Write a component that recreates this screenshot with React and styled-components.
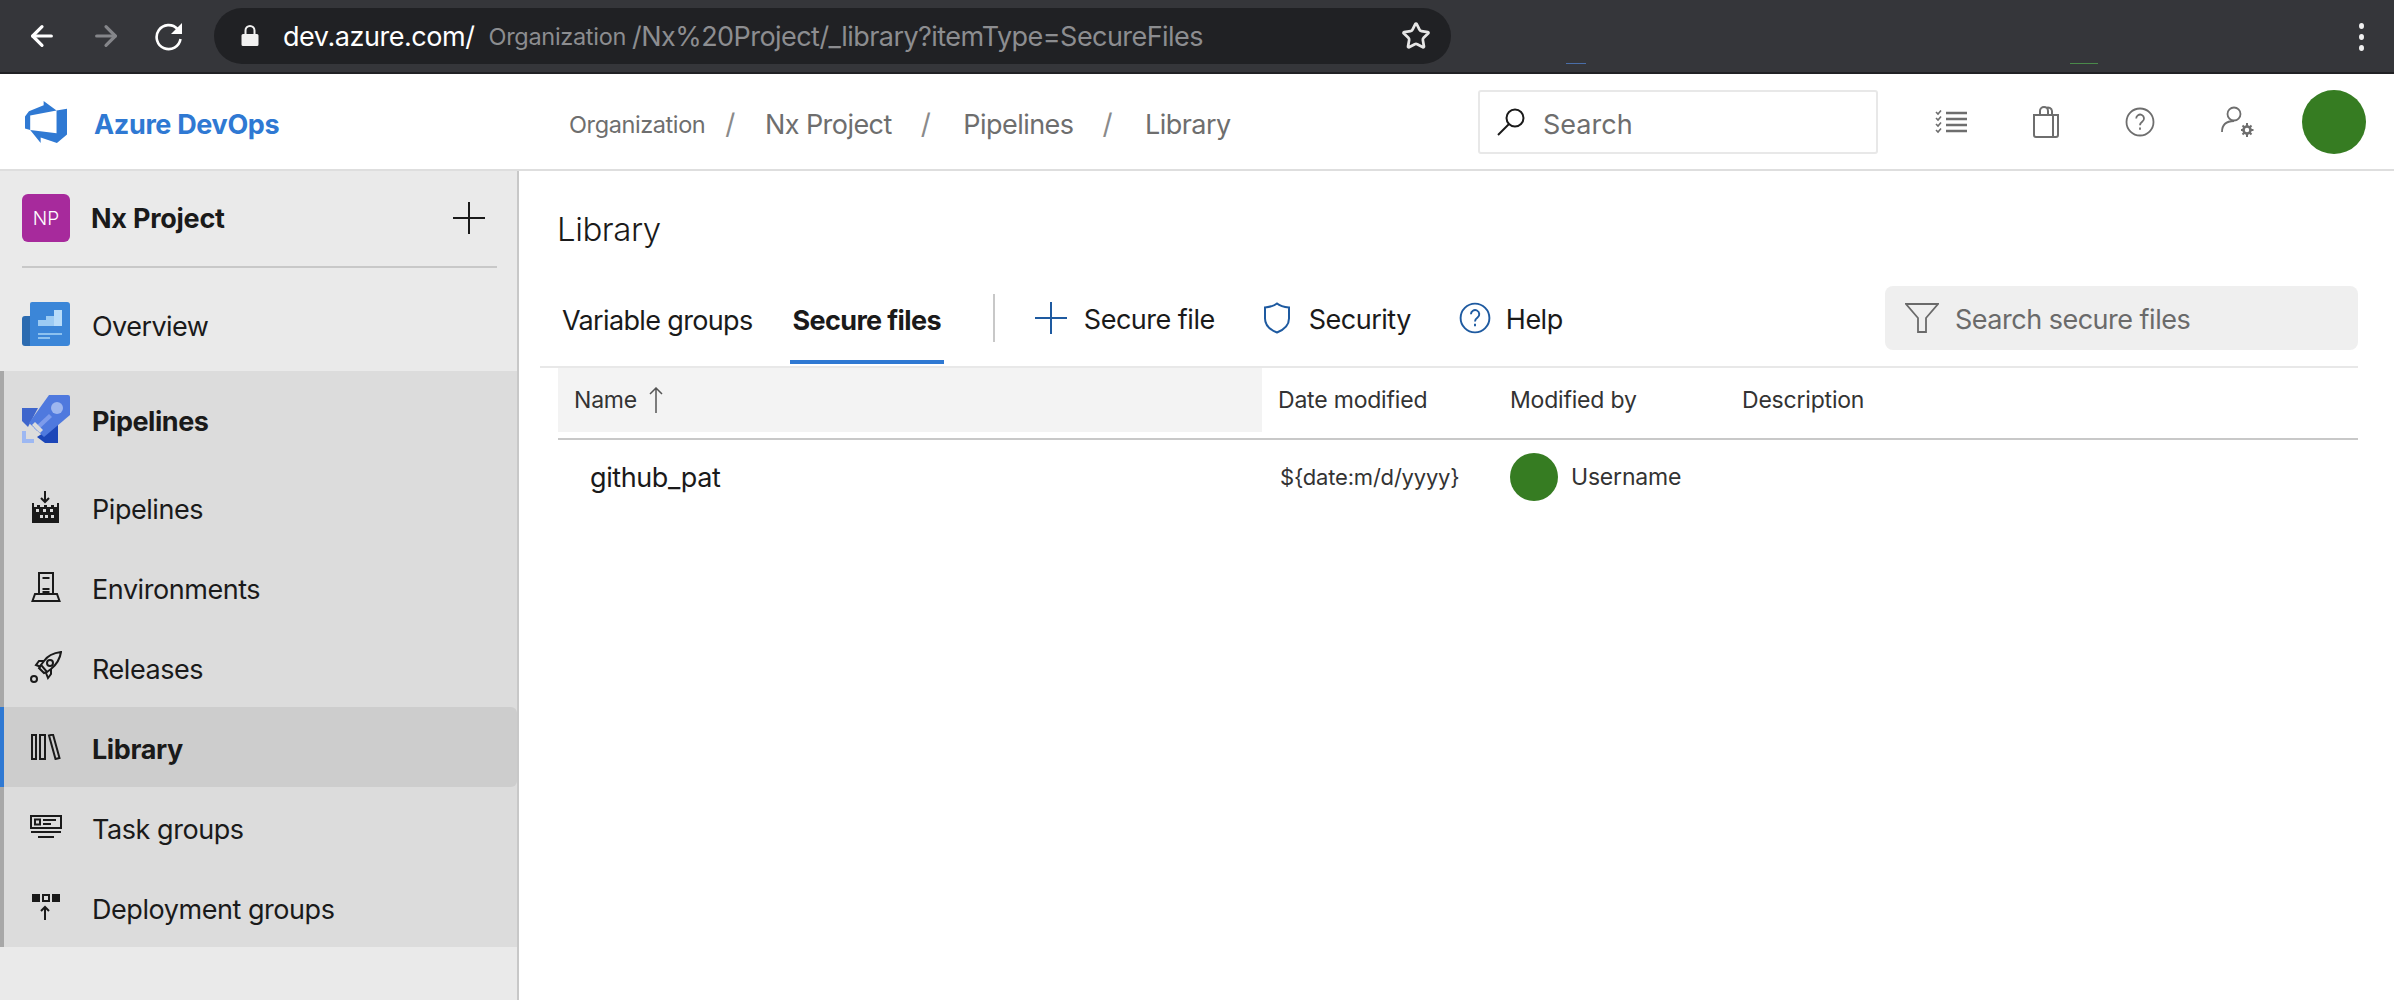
import styled, { createGlobalStyle } from "styled-components"
import { ArrowLeft, ArrowRight, Star } from "lucide-react"

const GlobalStyle = createGlobalStyle`
  * {
    box-sizing: border-box;
  }

  html,
  body {
    margin: 0;
    background: #fff;
    overflow: hidden;
  }

  body {
    font-family: Inter, "Liberation Sans", sans-serif;
    color: #1a1a1a;
  }
`

const Page = styled.div`
  width: 2394px;
  height: 1000px;
  display: flex;
  flex-direction: column;
`

/* browser chrome */

const BrowserBar = styled.div`
  position: relative;
  height: 74px;
  flex: none;
  background: #35363a;
  border-bottom: 2px solid #202124;
  display: flex;
  align-items: flex-start;
  padding: 8px 0 0 26px;
`

const NavIcons = styled.div`
  display: flex;
  align-items: center;
  gap: 32px;
  height: 56px;
  width: 188px;
  flex: none;
`

const NavIcon = styled.span`
  display: flex;
  color: ${(props) => (props.dim ? "#85868a" : "#fff")};
`

const UrlPill = styled.div`
  width: 1237px;
  height: 56px;
  flex: none;
  border-radius: 28px;
  background: #202124;
  display: flex;
  align-items: center;
  padding: 0 20px 0 27px;
  font-size: 27px;
  letter-spacing: -0.45px;
  white-space: nowrap;
`

const UrlHost = styled.span`
  color: #fff;
  margin-left: 24px;
`

const UrlOrg = styled.span`
  color: #8c8d90;
  font-size: 23.5px;
  letter-spacing: -0.3px;
  margin: 0 6px 0 14px;
`

const UrlPath = styled.span`
  color: #8c8d90;
  letter-spacing: -0.55px;
`

const UrlStar = styled.span`
  display: flex;
  margin-left: auto;
  color: #e6e6e6;
`

const TabMark = styled.span`
  position: absolute;
  top: 63px;
  left: ${(props) => props.left}px;
  width: ${(props) => props.width}px;
  height: 1px;
  background: ${(props) => props.color};
`

const MoreDots = styled.div`
  position: absolute;
  right: 30px;
  top: 23px;
  display: flex;
  flex-direction: column;
  gap: 5px;

  span {
    width: 5px;
    height: 6px;
    border-radius: 50%;
    background: #f0f0f0;
  }
`

/* azure header */

const Header = styled.header`
  height: 97px;
  flex: none;
  display: flex;
  align-items: center;
  border-bottom: 2px solid #dedede;
  padding-left: 25px;
`

const Brand = styled.div`
  display: flex;
  align-items: center;
  gap: 27px;
  width: 544px;
  flex: none;
  color: #2f79d3;
  font-size: 27px;
  font-weight: 700;
  letter-spacing: -0.35px;
`

const Crumbs = styled.nav`
  display: flex;
  align-items: center;
  width: 909px;
  flex: none;
  padding-top: 5px;
  color: #6e6e6e;
  font-size: 27px;
  letter-spacing: -0.55px;
`

const CrumbOrg = styled.span`
  font-size: 23.5px;
  letter-spacing: -0.4px;
`

const Slash = styled.span`
  color: #8a8a8a;
  font-size: 28px;
  margin: 0 ${(props) => (props.first ? 30 : 33)}px 0 ${(props) => (props.first ? 20 : 29)}px;
`

const SearchBox = styled.div`
  width: 400px;
  height: 64px;
  flex: none;
  border: 2px solid #e8e8e8;
  border-radius: 3px;
  display: flex;
  align-items: center;
  gap: 17px;
  padding-left: 16px;
  color: #6e6e6e;
  font-size: 27px;
`

const HeaderIcons = styled.div`
  display: flex;
  align-items: center;
  flex: none;
  margin-left: 57px;
  gap: 66px;
  color: #6e6e6e;
`

const Avatar = styled.div`
  width: ${(props) => props.size}px;
  height: ${(props) => props.size}px;
  border-radius: 50%;
  background: #367c22;
  flex: none;
`

const HeaderAvatar = styled(Avatar)`
  margin-left: 47px;
`

/* the text sits a little lower than the icons next to it */
const Label = styled.span`
  padding-top: 5px;
`

const ToolLabel = styled.span`
  padding-top: 3px;
`

/* body */

const Body = styled.div`
  flex: 1;
  display: flex;
  min-height: 0;
`

const Sidebar = styled.aside`
  width: 519px;
  flex: none;
  background: #eaeaea;
  border-right: 2px solid #c8c8c8;
`

const ProjectRow = styled.div`
  height: 97px;
  margin: 0 20px 0 22px;
  border-bottom: 2px solid #c8c8c8;
  display: flex;
  align-items: center;
  padding-bottom: 1px;
  font-size: 27px;
  font-weight: 700;
  letter-spacing: -0.25px;
`

const ProjectBadge = styled.div`
  width: 48px;
  height: 48px;
  border-radius: 6px;
  background: #a72a9c;
  color: #fff;
  font-size: 19px;
  font-weight: 300;
  letter-spacing: 0;
  display: flex;
  align-items: center;
  justify-content: center;
  margin-right: 21px;
`

const ProjectPlus = styled.span`
  display: flex;
  margin-left: auto;
  margin-right: 12px;
`

const OverviewRow = styled.div`
  height: 103px;
  display: flex;
  align-items: center;
  padding: 8px 0 0 22px;
  gap: 22px;
  font-size: 27px;
  letter-spacing: -0.55px;
`

const PipelinesGroup = styled.div`
  background: #dcdcdc;
  border-left: 4px solid #a8a8a8;
`

const GroupHead = styled.div`
  height: 96px;
  display: flex;
  align-items: center;
  padding-left: 18px;
  gap: 22px;
  font-size: 27px;
  font-weight: 700;
  letter-spacing: -0.45px;
`

const NavItem = styled.div`
  position: relative;
  height: 80px;
  display: flex;
  align-items: center;
  padding-left: 18px;
  gap: 22px;
  font-size: 27px;
  font-weight: ${(props) => (props.active ? 700 : 400)};
  letter-spacing: ${(props) => (props.active ? "-0.4px" : "-0.45px")};
  background: ${(props) => (props.active ? "#cdcdcd" : "transparent")};
  border-radius: ${(props) => (props.active ? "0 6px 6px 0" : "0")};

  ${(props) =>
    props.active &&
    `
    &::before {
      content: "";
      position: absolute;
      left: -4px;
      top: 0;
      bottom: 0;
      width: 4px;
      background: #2f79d3;
    }
  `}
`

const NavGlyph = styled.span`
  width: 48px;
  height: 48px;
  flex: none;
  display: flex;
  align-items: center;
  justify-content: center;
`

const Main = styled.main`
  flex: 1;
  min-width: 0;
  padding: 0 36px 0 21px;
`

const Title = styled.h1`
  margin: 0;
  padding: 33px 0 0 17px;
  height: 115px;
  font-size: 33px;
  line-height: 50px;
  font-weight: 300;
  letter-spacing: -0.45px;
  color: #1a1a1a;
`

const TabBar = styled.div`
  height: 82px;
  display: flex;
  align-items: flex-start;
  padding-left: 19px;
  border-bottom: 2px solid #e8e8e8;
`

const Tab = styled.div`
  height: 78px;
  padding: 15px 3px 0;
  font-size: 27px;
  line-height: 40px;
  letter-spacing: -0.65px;
  margin-right: ${(props) => props.gap}px;
  font-weight: ${(props) => (props.active ? 700 : 400)};
  border-bottom: 4px solid ${(props) => (props.active ? "#2f79d3" : "transparent")};
  color: #1a1a1a;
`

const TabDivider = styled.div`
  width: 2px;
  height: 48px;
  margin: 8px 40px 0 49px;
  background: #c8c8c8;
`

const Action = styled.div`
  display: flex;
  align-items: center;
  height: 48px;
  margin-top: 8px;
  gap: ${(props) => props.gap}px;
  margin-right: ${(props) => props.after}px;
  font-size: 27px;
  letter-spacing: -0.5px;
`

const ActionIcon = styled.span`
  display: flex;
  color: #1e5aa0;
`

const FilterBox = styled.div`
  margin-left: auto;
  width: 473px;
  height: 64px;
  border-radius: 8px;
  background: #efefef;
  display: flex;
  align-items: center;
  gap: 16px;
  padding: 0 0 0 20px;
  color: #6a6a6a;
  font-size: 27px;
  letter-spacing: -0.5px;
`

const TableHead = styled.div`
  margin-left: 18px;
  height: 72px;
  display: grid;
  grid-template-columns: 704px 232px 232px 1fr;
  border-bottom: 2px solid #c8c8c8;
  font-size: 23px;
  letter-spacing: -0.2px;
  color: #333;
`

const HeadCell = styled.div`
  height: 64px;
  display: flex;
  align-items: center;
  gap: 12px;
  padding-left: 16px;
  background: ${(props) => (props.sorted ? "#f3f3f3" : "transparent")};
`

const TableRow = styled.div`
  margin-left: 18px;
  height: 74px;
  display: grid;
  grid-template-columns: 704px 232px 232px 1fr;
  align-items: center;
`

const FileName = styled.div`
  padding-left: 32px;
  font-size: 27px;
  letter-spacing: -0.4px;
`

const DateCell = styled.div`
  padding-left: 18px;
  font-size: 22px;
  letter-spacing: -0.2px;
  color: #333;
`

const UserCell = styled.div`
  display: flex;
  align-items: center;
  gap: 13px;
  padding-left: 16px;
  font-size: 23px;
  letter-spacing: -0.2px;
  color: #333;
`

function LockIcon() {
  return (
    <svg width="18" height="22" viewBox="0 0 18 22" fill="#f1f1f1">
      <path d="M2 9h14a1.5 1.5 0 0 1 1.5 1.5v9A1.5 1.5 0 0 1 16 21H2a1.5 1.5 0 0 1-1.5-1.5v-9A1.5 1.5 0 0 1 2 9z" />
      <path d="M4.5 9V5.5a4.5 4.5 0 0 1 9 0V9" fill="none" stroke="#f1f1f1" strokeWidth="2" />
    </svg>
  )
}

function ReloadIcon() {
  return (
    <svg width="30" height="30" viewBox="0 0 30 30">
      <path d="M23.500 8a12 12 0 1 0 3 10" fill="none" stroke="#fff" strokeWidth="2.6" />
      <path d="M28 2v11H17z" fill="#fff" />
    </svg>
  )
}

function AzureLogo() {
  return (
    <svg width="42" height="42" viewBox="0 0 24 24" fill="#2f79d3">
      <path d="M0 8.877L2.247 5.91l8.405-3.416V.022l7.37 5.393L2.966 8.338v8.225L0 15.707zm24-4.45v14.651l-5.753 4.9-9.303-3.057v3.056l-5.978-7.416 15.057 1.798V5.415z" />
    </svg>
  )
}

function SearchGlass() {
  return (
    <svg width="30" height="30" viewBox="0 0 30 30" fill="none" stroke="#1a1a1a" strokeWidth="2">
      <circle cx="19" cy="11" r="8.5" />
      <path d="M13 17L2 28" />
    </svg>
  )
}

function ChecklistIcon() {
  return (
    <svg width="32" height="24" viewBox="0 0 32 24" fill="none" stroke="#6e6e6e">
      <path d="M11 3h21M11 9h21M11 15h21M11 21h21" strokeWidth="2.4" />
      <path d="M1 2l2 2 3-3.5M1 8l2 2 3-3.5M1 14l2 2 3-3.5M1 20l2 2 3-3.5" strokeWidth="1.6" />
    </svg>
  )
}

function BagIcon() {
  return (
    <svg width="26" height="32" viewBox="0 0 26 32" fill="none" stroke="#6e6e6e" strokeWidth="2">
      <path d="M1 9h19v22H3a2 2 0 0 1-2-2z" />
      <path d="M20 9h5v20a2 2 0 0 1-2 2h-3" />
      <path d="M7 9V5a4 4 0 0 1 8 0v4M13 2a4 4 0 0 1 6 3v4" />
    </svg>
  )
}

function HelpCircle({ size, color }) {
  return (
    <svg width={size} height={size} viewBox="0 0 30 30" fill="none" stroke={color} strokeWidth="1.8">
      <circle cx="15" cy="15" r="13.5" />
      <path d="M11.2 11.5a3.9 3.9 0 1 1 6.2 3.1c-1.5 1.1-2.4 1.9-2.4 3.6" />
      <path d="M15 20.5v2.2" />
    </svg>
  )
}

function UserGear() {
  return (
    <svg width="34" height="32" viewBox="0 0 34 32" fill="none" stroke="#6e6e6e" strokeWidth="1.8">
      <circle cx="13" cy="8" r="6.5" />
      <path d="M1 26c0-7 4-11 12-11" />
      <circle cx="26" cy="24" r="3.5" strokeWidth="2.6" />
      <path d="M26 17v3M26 28v3M20 24h2.5M30 24h2.5M21.5 19.5l2 2M28.5 26.5l2 2M21.5 28.5l2-2M28.5 21.5l2-2" strokeWidth="2" />
    </svg>
  )
}

function PlusIcon({ size, color, width }) {
  return (
    <svg width={size} height={size} viewBox="0 0 32 32" fill="none" stroke={color} strokeWidth={width}>
      <path d="M16 0v32M0 16h32" />
    </svg>
  )
}

function OverviewIcon() {
  return (
    <svg width="48" height="44" viewBox="0 0 48 44">
      <path d="M3 14h8v30H3a3 3 0 0 1-3-3V17a3 3 0 0 1 3-3z" fill="#2c6bb0" />
      <path d="M10 0h35a3 3 0 0 1 3 3v38a3 3 0 0 1-3 3H8V2a2 2 0 0 1 2-2z" fill="#3b86d8" />
      <path d="M16 18h8v6h-8zM24 14h8v10h-8z" fill="#9ccbf3" />
      <path d="M32 8h8v16h-8z" fill="#b8dcf9" />
      <path d="M16 31h24v2H16zM16 35h12v2H16z" fill="#8cc1ef" />
    </svg>
  )
}

function PipelinesIcon() {
  return (
    <svg width="48" height="48" viewBox="0 0 48 48">
      <path d="M0 13h16L6 32 0 26z" fill="#3f66cc" />
      <path d="M36 28v20H23l-8-6z" fill="#1c46b8" />
      <path d="M27 0h19a2 2 0 0 1 2 2v18L22 42 7 28z" fill="#4f79de" />
      <circle cx="35" cy="13" r="6" fill="#9db6ef" />
      <path d="M12 33l15-14 3 3-15 14z" fill="#7d9beb" />
      <path d="M0 36h4v8h8v4H0z" fill="#9db8f2" />
      <path d="M10 30l3-3 8 8-3 3z" fill="#dcdcdc" />
    </svg>
  )
}

const lineProps = { fill: "none", stroke: "#1a1a1a", strokeWidth: 2 }

function SubPipelines() {
  return (
    <svg width="28" height="32" viewBox="0 0 28 32">
      <path d="M13 0v11M9 7l4 4 4-4" {...lineProps} />
      <path d="M0 12h2v4h3v-2h3v2h4v-2h3v2h4v-2h3v2h3v-4h2v20H0z" fill="#1a1a1a" />
      <path d="M8 24h3v3H8zM13 24h3v3h-3zM19 24h3v3h-3z" fill="#dcdcdc" />
      <path d="M4 18h3v3H4zM11 18h3v3h-3zM18 18h3v3h-3z" fill="#dcdcdc" />
    </svg>
  )
}

function EnvironmentsIcon() {
  return (
    <svg width="30" height="30" viewBox="0 0 30 30" {...lineProps}>
      <path d="M8 22V1h14v21" />
      <path d="M11.5 6h7M11.5 17h7M11.5 20h7" />
      <path d="M4 22h22l2.5 7h-27z" />
    </svg>
  )
}

function ReleasesIcon() {
  return (
    <svg width="32" height="32" viewBox="0 0 32 32" {...lineProps}>
      <path d="M31 1c-8 1-13 3-17 9l-3 4 6 7 4-3c6-5 9-10 10-17z" />
      <circle cx="20" cy="12" r="3" />
      <path d="M14 10H9l-3 4 5 2M21 18v5l-3 4-2-5M11 14l-2 3 5 5 3-1" />
      <circle cx="4" cy="28" r="3" />
    </svg>
  )
}

function LibraryIcon() {
  return (
    <svg width="30" height="26" viewBox="0 0 30 26" {...lineProps}>
      <path d="M1 1h4v24H1zM9 1h5v24H9zM18 1.500l4-1 6.500 23.500-4 1z" />
    </svg>
  )
}

function TaskGroupsIcon() {
  return (
    <svg width="32" height="24" viewBox="0 0 32 24" {...lineProps}>
      <path d="M1 1h30v12H1z" />
      <path d="M5 4.500h5v5H5zM13 5h13M13 9h8M1 17h30M8 22h16" />
    </svg>
  )
}

function DeploymentIcon() {
  return (
    <svg width="28" height="26" viewBox="0 0 28 26">
      <path d="M0 0h8v8H0zM20 0h8v8h-8z" fill="#1a1a1a" />
      <path d="M11 1h6v6h-6z" {...lineProps} />
      <path d="M13 26V13M9 17l4-4 4 4" {...lineProps} />
    </svg>
  )
}

function ShieldIcon() {
  return (
    <svg width="28" height="32" viewBox="0 0 28 32" fill="none" stroke="#1e5aa0" strokeWidth="2">
      <path d="M14 1.500c3 2.500 7 3.500 12 4v11c0 6.500-4.500 11-12 14-7.500-3-12-7.500-12-14v-11c5-.5 9-1.500 12-4z" />
    </svg>
  )
}

function FunnelIcon() {
  return (
    <svg width="34" height="30" viewBox="0 0 34 30" fill="none" stroke="#6a6a6a" strokeWidth="1.8">
      <path d="M1 1h32L21 15v14h-8V15z" />
    </svg>
  )
}

function SortArrow() {
  return (
    <svg width="14" height="26" viewBox="0 0 14 26" fill="none" stroke="#555" strokeWidth="1.500">
      <path d="M7 26V1M1 7l6-6 6 6" />
    </svg>
  )
}

const navItems = [
  { label: "Pipelines", icon: <SubPipelines /> },
  { label: "Environments", icon: <EnvironmentsIcon /> },
  { label: "Releases", icon: <ReleasesIcon /> },
  { label: "Library", icon: <LibraryIcon />, active: true },
  { label: "Task groups", icon: <TaskGroupsIcon /> },
  { label: "Deployment groups", icon: <DeploymentIcon /> },
]

export default function App() {
  return (
    <Page>
      <GlobalStyle />
      <BrowserBar>
        <NavIcons>
          <NavIcon>
            <ArrowLeft size={32} strokeWidth={2.4} />
          </NavIcon>
          <NavIcon dim>
            <ArrowRight size={32} strokeWidth={2.4} />
          </NavIcon>
          <NavIcon>
            <ReloadIcon />
          </NavIcon>
        </NavIcons>
        <UrlPill>
          <LockIcon />
          <UrlHost>dev.azure.com/</UrlHost>
          <UrlOrg>Organization</UrlOrg>
          <UrlPath>/Nx%20Project/_library?itemType=SecureFiles</UrlPath>
          <UrlStar>
            <Star size={30} strokeWidth={2.2} />
          </UrlStar>
        </UrlPill>
        <TabMark left={1566} width={20} color="#4a6ea8" />
        <TabMark left={2070} width={28} color="#4a8a4a" />
        <MoreDots>
          <span />
          <span />
          <span />
        </MoreDots>
      </BrowserBar>

      <Header>
        <Brand>
          <AzureLogo />
          <Label>Azure DevOps</Label>
        </Brand>
        <Crumbs>
          <CrumbOrg>Organization</CrumbOrg>
          <Slash first>/</Slash>
          Nx Project
          <Slash>/</Slash>
          Pipelines
          <Slash>/</Slash>
          Library
        </Crumbs>
        <SearchBox>
          <SearchGlass />
          <Label>Search</Label>
        </SearchBox>
        <HeaderIcons>
          <ChecklistIcon />
          <BagIcon />
          <HelpCircle size={30} color="#6e6e6e" />
          <UserGear />
        </HeaderIcons>
        <HeaderAvatar size={64} />
      </Header>

      <Body>
        <Sidebar>
          <ProjectRow>
            <ProjectBadge>NP</ProjectBadge>
            Nx Project
            <ProjectPlus>
              <PlusIcon size={32} color="#1a1a1a" width={2} />
            </ProjectPlus>
          </ProjectRow>
          <OverviewRow>
            <NavGlyph>
              <OverviewIcon />
            </NavGlyph>
            <Label>Overview</Label>
          </OverviewRow>
          <PipelinesGroup>
            <GroupHead>
              <NavGlyph>
                <PipelinesIcon />
              </NavGlyph>
              <Label>Pipelines</Label>
            </GroupHead>
            {navItems.map((item) => (
              <NavItem key={item.label} active={item.active}>
                <NavGlyph>{item.icon}</NavGlyph>
                <Label>{item.label}</Label>
              </NavItem>
            ))}
          </PipelinesGroup>
        </Sidebar>

        <Main>
          <Title>Library</Title>
          <TabBar>
            <Tab gap={34}>Variable groups</Tab>
            <Tab active>Secure files</Tab>
            <TabDivider />
            <Action gap={17} after={48}>
              <ActionIcon>
                <PlusIcon size={32} color="#1e5aa0" width={2} />
              </ActionIcon>
              <ToolLabel>Secure file</ToolLabel>
            </Action>
            <Action gap={18} after={48}>
              <ActionIcon>
                <ShieldIcon />
              </ActionIcon>
              <ToolLabel>Security</ToolLabel>
            </Action>
            <Action gap={15}>
              <ActionIcon>
                <HelpCircle size={32} color="#1e5aa0" />
              </ActionIcon>
              <ToolLabel>Help</ToolLabel>
            </Action>
            <FilterBox>
              <FunnelIcon />
              <ToolLabel>Search secure files</ToolLabel>
            </FilterBox>
          </TabBar>
          <TableHead>
            <HeadCell sorted>
              Name
              <SortArrow />
            </HeadCell>
            <HeadCell>Date modified</HeadCell>
            <HeadCell>Modified by</HeadCell>
            <HeadCell>Description</HeadCell>
          </TableHead>
          <TableRow>
            <FileName>github_pat</FileName>
            <DateCell>{"${date:m/d/yyyy}"}</DateCell>
            <UserCell>
              <Avatar size={48} />
              Username
            </UserCell>
          </TableRow>
        </Main>
      </Body>
    </Page>
  )
}
